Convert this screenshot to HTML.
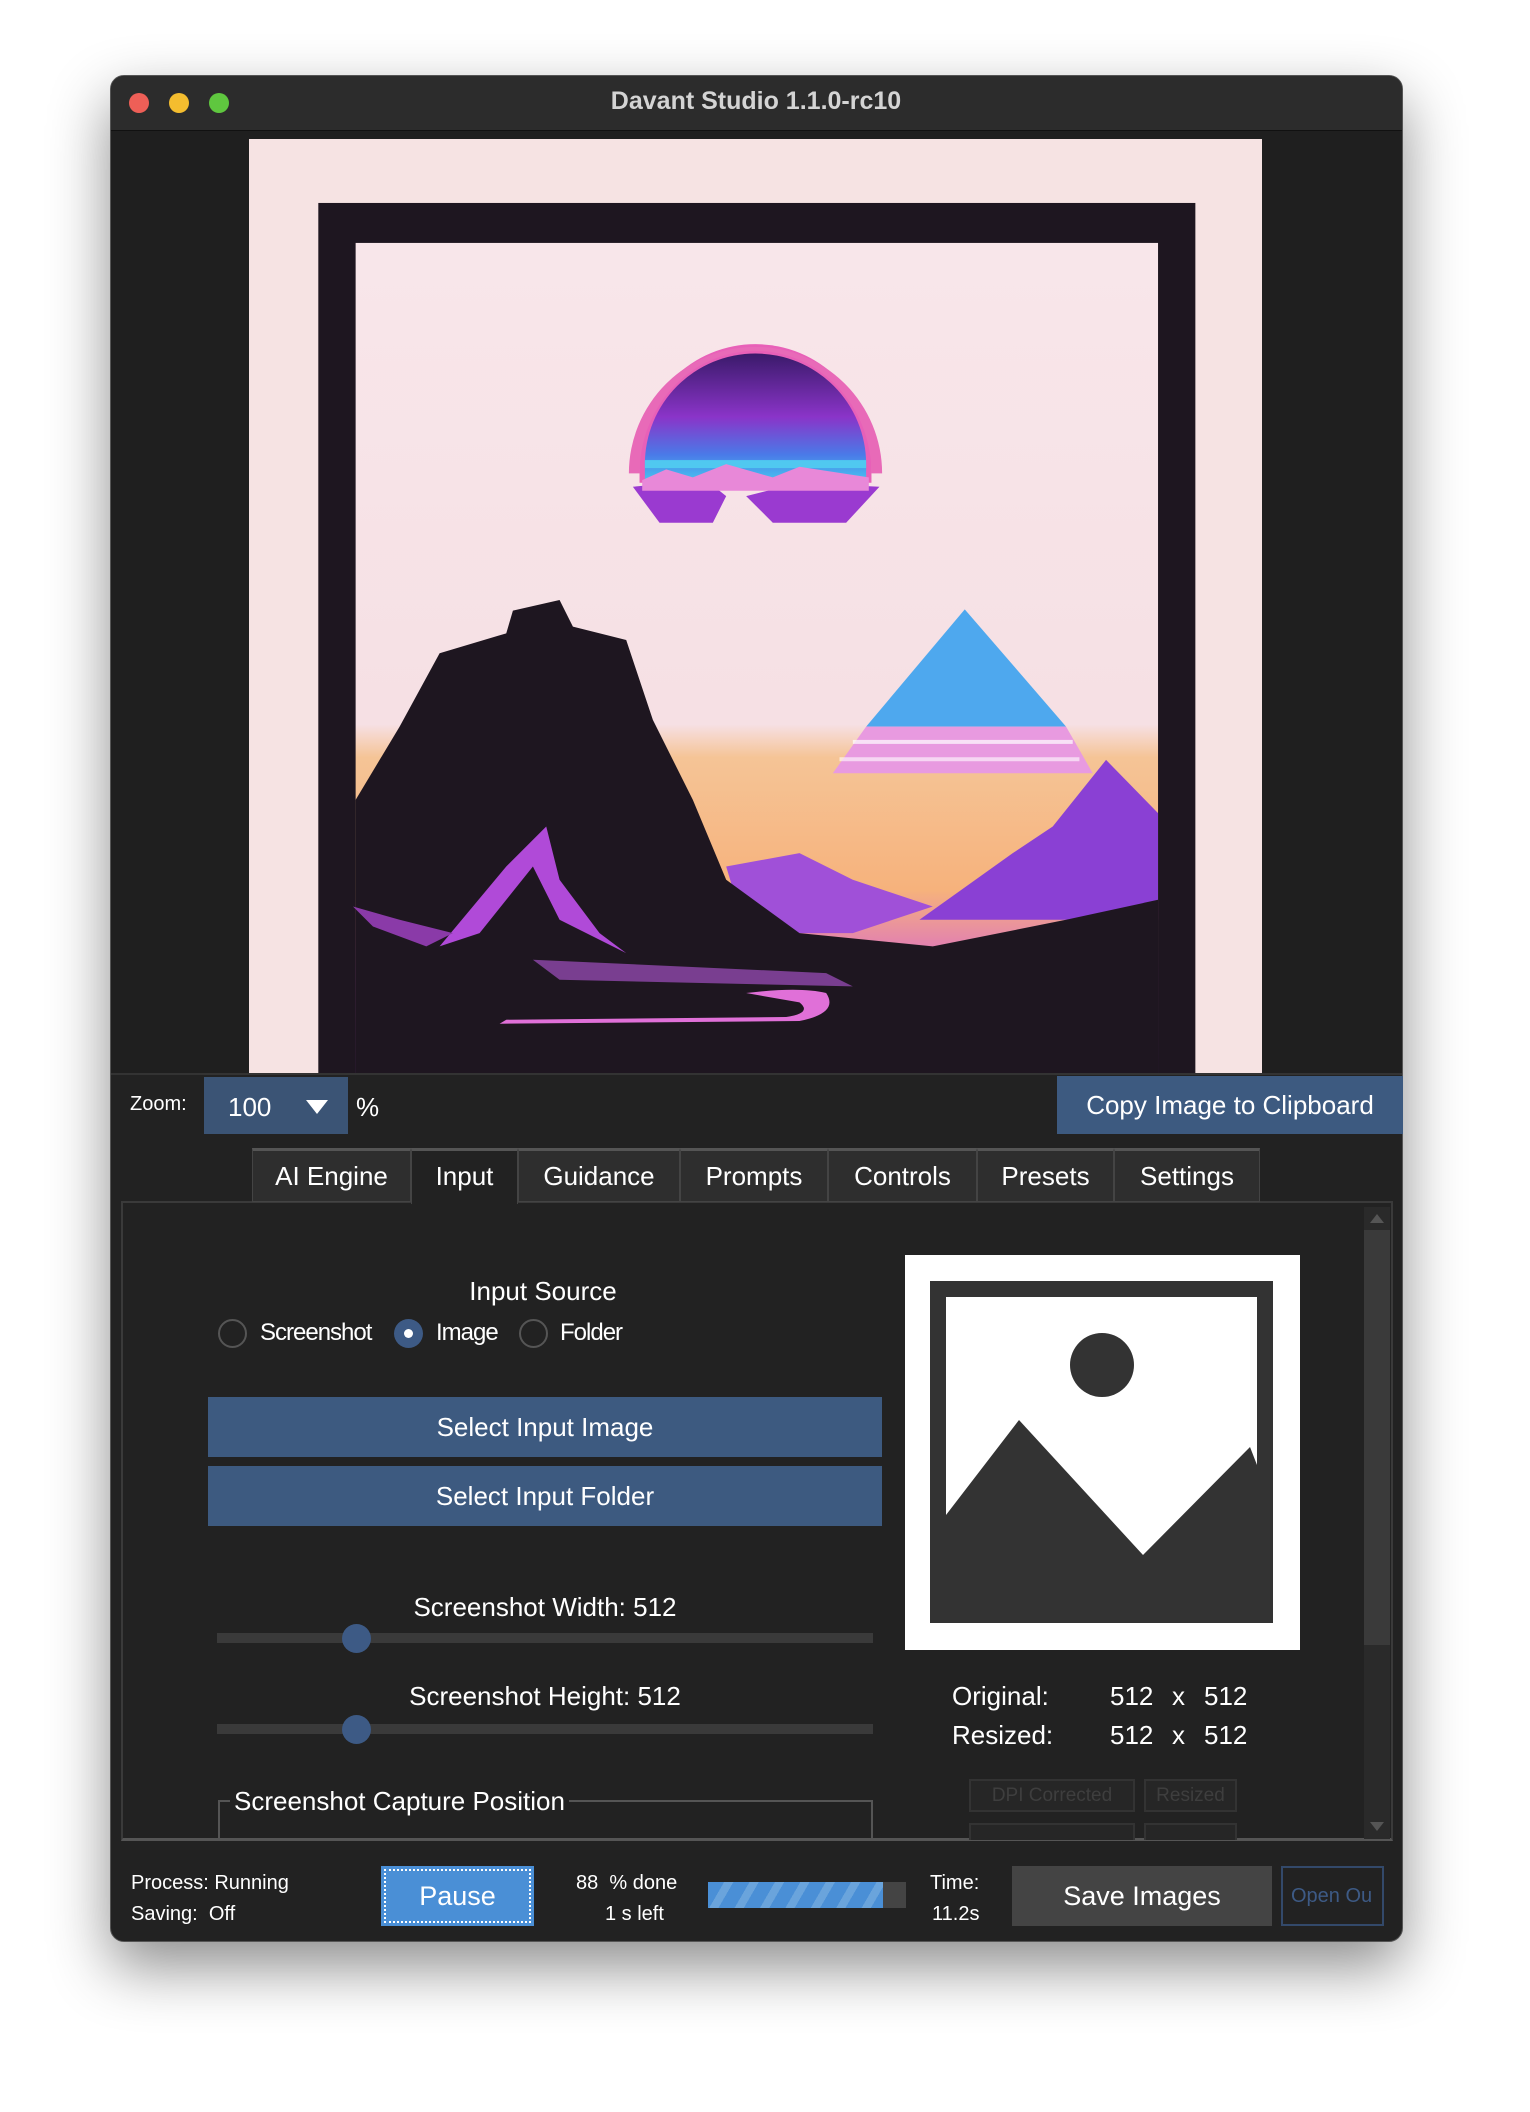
<!DOCTYPE html>
<html><head><meta charset="utf-8"><style>
*{margin:0;padding:0;box-sizing:border-box}
body{width:1530px;height:2112px;background:#fff;font-family:"Liberation Sans",sans-serif;position:relative;overflow:hidden;color:#fff}
.a{position:absolute}
.win{left:110px;top:75px;width:1293px;height:1867px;background:#222;border-radius:14px;box-shadow:0 25px 60px rgba(0,0,0,.45);overflow:hidden;border:1px solid #555}
.t{white-space:nowrap;line-height:1}
.tab{position:absolute;top:1148px;height:54px;background:#2e2e2e;border:1px solid #444;border-top:3px solid #555;font-size:26px;text-align:center;line-height:50px}
.btn{background:#3d5a80;font-size:26px;text-align:center}
</style></head><body>
<div class="a win"></div>
<!-- title bar -->
<div class="a" style="left:111px;top:76px;width:1291px;height:55px;background:#2c2c2c;border-radius:13px 13px 0 0;border-bottom:1px solid #111"></div>
<div class="a" style="left:129px;top:93px;width:20px;height:20px;border-radius:50%;background:#ee5f57"></div>
<div class="a" style="left:169px;top:93px;width:20px;height:20px;border-radius:50%;background:#f4bd2f"></div>
<div class="a" style="left:209px;top:93px;width:20px;height:20px;border-radius:50%;background:#5fc73f"></div>
<div class="a t" style="left:0;width:1512px;top:89px;text-align:center;font-size:25px;font-weight:bold;color:#d4d4d4">Davant Studio 1.1.0-rc10</div>
<!-- image area -->
<div class="a" style="left:111px;top:131px;width:1291px;height:942px;background:#1f1f1f"></div>
<svg class="a" style="left:249px;top:139px" width="1013" height="934" viewBox="187 104 760 701" preserveAspectRatio="none">
<defs>
<linearGradient id="sky" x1="0" y1="0" x2="0" y2="1">
<stop offset="0" stop-color="#f8e6ea"/><stop offset="0.58" stop-color="#f6e0e4"/><stop offset="0.62" stop-color="#f5c496"/><stop offset="0.78" stop-color="#f6b27c"/><stop offset="0.88" stop-color="#d96ac8"/><stop offset="1" stop-color="#6b2f80"/></linearGradient>
<linearGradient id="moon" x1="0" y1="0" x2="0" y2="1"><stop offset="0" stop-color="#3a1a6a"/><stop offset="0.5" stop-color="#8a34c8"/><stop offset="0.8" stop-color="#4a7ae8"/><stop offset="1" stop-color="#48c0f0"/></linearGradient>
</defs>
<rect x="187" y="104" width="760" height="701" fill="#f6e3e3"/>
<rect x="239" y="152" width="658" height="653" fill="#1e1620"/>
<rect x="267" y="182" width="602" height="623" fill="url(#sky)"/>
<path d="M480 345 A87 87 0 0 1 654 345 L654 362 L480 362Z" fill="#e860b8"/>
<path d="M484 348 A83 83 0 0 1 650 348 L650 360 L484 360Z" fill="url(#moon)"/>
<path d="M472 355 A95 95 0 0 1 662 355 L654 355 A87 92 0 0 0 480 355Z" fill="#e86ab8"/>
<rect x="484" y="345" width="166" height="6" fill="#50c8f0"/>
<path d="M475 365 L530 360 L545 372 L535 392 L495 392Z" fill="#9a3ad0"/>
<path d="M560 372 L600 362 L660 365 L635 392 L580 392Z" fill="#9a3ad0"/>
<path d="M482 360 L500 352 L520 358 L545 348 L580 358 L600 350 L652 358 L652 368 L482 368Z" fill="#e888d8"/>
<path d="M724 457 L650 545 L800 545Z" fill="#4ea8ee"/>
<path d="M650 545 L800 545 L820 580 L625 580Z" fill="#e89ae0"/>
<rect x="640" y="555" width="165" height="3" fill="#fff" opacity=".7"/>
<rect x="630" y="568" width="180" height="3" fill="#fff" opacity=".6"/>
<path d="M830 570 L869 610 L869 690 L690 690 L760 640 L790 620Z" fill="#8a40d4"/>
<path d="M545 650 L600 640 L640 660 L700 680 L640 700 L560 700Z" fill="#a050d8"/>
<path d="M267 600 L300 545 L330 490 L380 475 L385 458 L420 450 L430 470 L470 480 L490 540 L520 600 L545 660 L600 700 L700 710 L800 690 L869 675 L869 805 L267 805Z" fill="#1e1620"/>
<path d="M330 710 L380 650 L410 620 L420 660 L450 700 L470 715 L420 690 L400 650 L360 700Z" fill="#b04ad8"/>
<path d="M265 680 L300 690 L340 700 L320 710 L280 695Z" fill="#8a3aa8"/>
<path d="M375 768 L600 766 Q630 760 620 745 Q600 740 560 745 L600 752 Q610 760 590 763 L380 765Z" fill="#e070d8"/>
<path d="M400 720 L620 730 L640 740 L420 735Z" fill="#a050c0" opacity=".7"/>
</svg>
<!-- zoom row -->
<div class="a" style="left:111px;top:1073px;width:1291px;height:2px;background:#333"></div>
<div class="a t" style="left:130px;top:1094px;font-size:20px">Zoom:</div>
<div class="a" style="left:204px;top:1077px;width:144px;height:57px;background:#3b5475"></div>
<div class="a t" style="left:228px;top:1094px;font-size:26px">100</div>
<div class="a" style="left:306px;top:1100px;width:0;height:0;border-left:11px solid transparent;border-right:11px solid transparent;border-top:14px solid #fff"></div>
<div class="a t" style="left:356px;top:1094px;font-size:26px">%</div>
<div class="a btn" style="left:1057px;top:1076px;width:346px;height:58px;line-height:58px">Copy Image to Clipboard</div>
<!-- tabs -->
<div class="a" style="left:121px;top:1201px;width:1272px;height:640px;border:2px solid #3a3a3a;border-bottom:3px solid #555;background:#222"></div>
<div class="tab" style="left:252px;width:159px">AI Engine</div>
<div class="tab" style="left:411px;width:107px;background:#222;border-bottom:none;height:56px">Input</div>
<div class="tab" style="left:518px;width:162px">Guidance</div>
<div class="tab" style="left:680px;width:148px">Prompts</div>
<div class="tab" style="left:828px;width:149px">Controls</div>
<div class="tab" style="left:977px;width:137px">Presets</div>
<div class="tab" style="left:1114px;width:146px">Settings</div>
<!-- scrollbar -->
<div class="a" style="left:1364px;top:1207px;width:26px;height:632px;background:#2a2a2a"></div>
<div class="a" style="left:1364px;top:1230px;width:26px;height:415px;background:#3a3a3a"></div>
<div class="a" style="left:1370px;top:1214px;border-left:7px solid transparent;border-right:7px solid transparent;border-bottom:9px solid #555"></div>
<div class="a" style="left:1370px;top:1822px;border-left:7px solid transparent;border-right:7px solid transparent;border-top:9px solid #555"></div>
<!-- input source -->
<div class="a t" style="left:443px;width:200px;text-align:center;top:1278px;font-size:26px">Input Source</div>
<div class="a" style="left:218px;top:1319px;width:29px;height:29px;border-radius:50%;border:2px solid #555"></div>
<div class="a t" style="left:260px;top:1321px;font-size:24px;letter-spacing:-1px">Screenshot</div>
<div class="a" style="left:394px;top:1319px;width:29px;height:29px;border-radius:50%;background:#3d5a85"></div>
<div class="a" style="left:404px;top:1329px;width:9px;height:9px;border-radius:50%;background:#fff"></div>
<div class="a t" style="left:436px;top:1321px;font-size:24px;letter-spacing:-1px">Image</div>
<div class="a" style="left:519px;top:1319px;width:29px;height:29px;border-radius:50%;border:2px solid #555"></div>
<div class="a t" style="left:560px;top:1321px;font-size:24px;letter-spacing:-1px">Folder</div>
<div class="a btn" style="left:208px;top:1397px;width:674px;height:60px;line-height:60px">Select Input Image</div>
<div class="a btn" style="left:208px;top:1466px;width:674px;height:60px;line-height:60px">Select Input Folder</div>
<div class="a t" style="left:208px;width:674px;text-align:center;top:1594px;font-size:26px">Screenshot Width: 512</div>
<div class="a" style="left:217px;top:1633px;width:656px;height:10px;background:#3a3a3a"></div>
<div class="a" style="left:342px;top:1624px;width:29px;height:29px;border-radius:50%;background:#3d5a85"></div>
<div class="a t" style="left:208px;width:674px;text-align:center;top:1683px;font-size:26px">Screenshot Height: 512</div>
<div class="a" style="left:217px;top:1724px;width:656px;height:10px;background:#3a3a3a"></div>
<div class="a" style="left:342px;top:1715px;width:29px;height:29px;border-radius:50%;background:#3d5a85"></div>
<div class="a" style="left:218px;top:1800px;width:655px;height:40px;border:2px solid #555;border-bottom:none"></div>
<div class="a t" style="left:230px;top:1788px;font-size:26px;background:#222;padding:0 4px">Screenshot Capture Position</div>
<!-- preview -->
<div class="a" style="left:905px;top:1255px;width:395px;height:395px;background:#fff"></div>
<svg class="a" style="left:905px;top:1255px" width="395" height="395" viewBox="0 0 395 395">
<rect x="33" y="34" width="327" height="326" fill="none" stroke="#333" stroke-width="16"/>
<circle cx="197" cy="110" r="32" fill="#333"/>
<path d="M41 260 L114 165 L238 300 L345 192 L352 210 L352 352 L41 352Z" fill="#333"/>
</svg>
<div class="a t" style="left:952px;top:1683px;font-size:26px">Original:</div>
<div class="a t" style="left:1110px;top:1683px;font-size:26px">512</div>
<div class="a t" style="left:1172px;top:1683px;font-size:26px">x</div>
<div class="a t" style="left:1204px;top:1683px;font-size:26px">512</div>
<div class="a t" style="left:952px;top:1722px;font-size:26px">Resized:</div>
<div class="a t" style="left:1110px;top:1722px;font-size:26px">512</div>
<div class="a t" style="left:1172px;top:1722px;font-size:26px">x</div>
<div class="a t" style="left:1204px;top:1722px;font-size:26px">512</div>
<div class="a" style="left:969px;top:1779px;width:166px;height:33px;border:2px solid #333;color:#3e3e3e;font-size:19px;text-align:center;line-height:29px;background:#262626">DPI Corrected</div>
<div class="a" style="left:1144px;top:1779px;width:93px;height:33px;border:2px solid #333;color:#3e3e3e;font-size:19px;text-align:center;line-height:29px;background:#262626">Resized</div>
<div class="a" style="left:969px;top:1823px;width:166px;height:17px;border:2px solid #333;border-bottom:none;background:#262626"></div>
<div class="a" style="left:1144px;top:1823px;width:93px;height:17px;border:2px solid #333;border-bottom:none;background:#262626"></div>
<!-- bottom bar -->
<div class="a t" style="left:131px;top:1873px;font-size:20px">Process: Running</div>
<div class="a t" style="left:131px;top:1904px;font-size:20px">Saving:&nbsp; Off</div>
<div class="a" style="left:381px;top:1866px;width:153px;height:60px;background:#4a8fd6;font-size:27px;text-align:center;line-height:60px"><div style="position:absolute;inset:3px;border:2px dotted #fff"></div>Pause</div>
<div class="a t" style="left:576px;top:1873px;font-size:20px">88&nbsp; % done</div>
<div class="a t" style="left:605px;top:1904px;font-size:20px">1 s left</div>
<div class="a" style="left:708px;top:1882px;width:198px;height:26px;background:#444"></div>
<div class="a" style="left:708px;top:1882px;width:175px;height:26px;background:repeating-linear-gradient(120deg,#4a8fd6 0 14px,#6aa4dc 14px 22px)"></div>
<div class="a t" style="left:930px;top:1873px;font-size:20px">Time:</div>
<div class="a t" style="left:932px;top:1904px;font-size:20px">11.2s</div>
<div class="a" style="left:1012px;top:1866px;width:260px;height:60px;background:#444;font-size:27px;text-align:center;line-height:60px">Save Images</div>
<div class="a" style="left:1281px;top:1866px;width:103px;height:60px;border:2px solid #33496a;color:#3d5a85;font-size:20px;line-height:56px;padding-left:8px;overflow:hidden;white-space:nowrap">Open Ou</div>
</body></html>
